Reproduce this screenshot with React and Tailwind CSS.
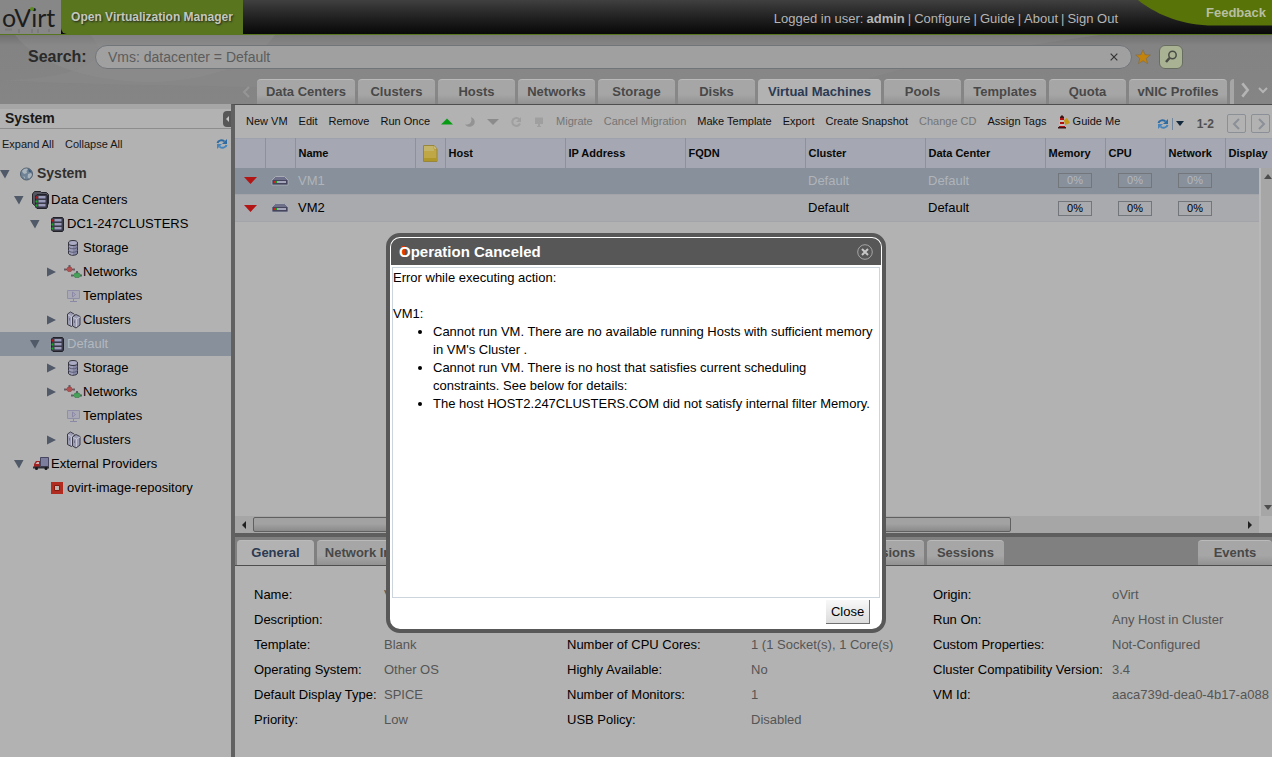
// App.jsx
// -------------------------------------------------------------------
// Virtualization admin console: header, search, system tree, VM grid,
// details panel and the "Operation Canceled" dialog on top of it all.
// -------------------------------------------------------------------

import React from "react";

// ─── Data ─────────────────────────────────────────────────────────────────────
const MAIN_TABS = [
  { label: "Data Centers", width: "w-[98px]" },
  { label: "Clusters", width: "w-[77px]" },
  { label: "Hosts", width: "w-[77px]" },
  { label: "Networks", width: "w-[77px]" },
  { label: "Storage", width: "w-[77px]" },
  { label: "Disks", width: "w-[77px]" },
  { label: "Virtual Machines", width: "w-[123px]", active: true },
  { label: "Pools", width: "w-[77px]" },
  { label: "Templates", width: "w-[82px]" },
  { label: "Quota", width: "w-[77px]" },
  { label: "vNIC Profiles", width: "w-[98px]" },
];

const TREE = [
  { label: "System", level: 0, icon: "globe", arrow: "down" },
  { label: "Data Centers", level: 1, icon: "racks", arrow: "down" },
  { label: "DC1-247CLUSTERS", level: 2, icon: "rack", arrow: "down" },
  { label: "Storage", level: 3, icon: "storage" },
  { label: "Networks", level: 3, icon: "network", arrow: "right" },
  { label: "Templates", level: 3, icon: "template" },
  { label: "Clusters", level: 3, icon: "cluster", arrow: "right" },
  { label: "Default", level: 2, icon: "rack", arrow: "down", selected: true },
  { label: "Storage", level: 3, icon: "storage", arrow: "right" },
  { label: "Networks", level: 3, icon: "network", arrow: "right" },
  { label: "Templates", level: 3, icon: "template" },
  { label: "Clusters", level: 3, icon: "cluster", arrow: "right" },
  { label: "External Providers", level: 1, icon: "truck", arrow: "down" },
  { label: "ovirt-image-repository", level: 2, icon: "repo" },
];

const INDENT = ["pl-0", "pl-[14px]", "pl-[30px]", "pl-[46px]"];

const VMS = [
  { name: "VM1", cluster: "Default", dataCenter: "Default", selected: true },
  { name: "VM2", cluster: "Default", dataCenter: "Default" },
];

const DETAILS_LEFT = [
  ["Name:", "VM1"],
  ["Description:", ""],
  ["Template:", "Blank"],
  ["Operating System:", "Other OS"],
  ["Default Display Type:", "SPICE"],
  ["Priority:", "Low"],
];

const DETAILS_MIDDLE = [
  ["Number of CPU Cores:", "1 (1 Socket(s), 1 Core(s)"],
  ["Highly Available:", "No"],
  ["Number of Monitors:", "1"],
  ["USB Policy:", "Disabled"],
];

const DETAILS_RIGHT = [
  ["Origin:", "oVirt"],
  ["Run On:", "Any Host in Cluster"],
  ["Custom Properties:", "Not-Configured"],
  ["Cluster Compatibility Version:", "3.4"],
  ["VM Id:", "aaca739d-dea0-4b17-a088"],
];

// ─── Icons ────────────────────────────────────────────────────────────────────
const Rack = () => (
  <>
    <path d="M3.500 4 5 2.500h9.500l1 1.500v11l-1 1.500H5L3.500 15z" fill="#3c3c49" stroke="#22222b" />
    <path d="M6.500 5h7M6.500 9h7M6.500 13h7" stroke="#9a9bb8" strokeWidth="2" />
    <path d="M6.500 6.500h7M6.500 10.500h7M6.500 14.500h7" stroke="#626380" />
    <path d="M3.500 4.500h2v2h-2z" fill="#c21212" />
    <path d="M3.500 8.500h2v2h-2zM3.500 12.500h2v2h-2z" fill="#16ad22" />
  </>
);

const TREE_ICONS = {
  globe: (
    <>
      <circle cx="8.500" cy="9" r="6" fill="#6f8296" stroke="#52606f" />
      <path d="M4 6c2-3 5-3 6-2L8.500 6 9 8 6.500 9 5 8zM10 9l3-1 1 2-2.500 3.500-2-1zM5 11l2 1v2z" fill="#a9b4bc" />
      <path d="M10 4c2 .5 3.500 2 3.700 3.500L11 7z" fill="#3f5c7b" />
    </>
  ),
  racks: (
    <>
      <path d="M.5 3 2.500.5h6l1 1h5l2 2v9l-2 3H4l-3.500-3z" fill="#565661" stroke="#26262e" />
      <g transform="translate(0 1)">
        <Rack />
      </g>
    </>
  ),
  rack: <Rack />,
  storage: (
    <>
      <path d="M4.500 4v10c0 3 9 3 9 0V4z" fill="#8687a5" stroke="#34343f" />
      <path d="M6 5v10M8 5v11" stroke="#b1b2c8" />
      <ellipse cx="9" cy="4" rx="4.500" ry="2.500" fill="#a9aac3" stroke="#34343f" />
      <path d="M4.500 7.500c0 3 9 3 9 0M4.500 11c0 3 9 3 9 0" fill="none" stroke="#5a5b74" />
    </>
  ),
  network: (
    <>
      <path d="M0 6.500h11M7 12.500h11" stroke="#50525a" />
      <path d="M0 5.500h2v2H0zM9 5.500h2v2H9zM7 11.500h2v2H7zM16 11.500h2v2h-2zM4.500 2h2v2h-2zM12 8h2v2h-2z" fill="#5e6066" />
      <path d="M2.500 6 4 4h3l1.500 2v1L7 8.500H4L2.500 7z" fill="#b05050" stroke="#803838" strokeWidth=".5" />
      <path d="M9.500 12l1.500-2h4l1.500 2v1L15 14.500h-4L9.500 13z" fill="#46a058" stroke="#2c7040" strokeWidth=".5" />
    </>
  ),
  template: (
    <>
      <path d="M3.500 3.500h12v8h-12z" fill="#a9a9b6" stroke="#908fa8" />
      <path d="M8.500 5v5l3-2.500zM9.500 12v2M6 14.500h7" fill="none" stroke="#8a88a5" />
    </>
  ),
  cluster: (
    <>
      <path d="M3.500 3 6.500 1l3.500 2v10l-2.500 2.500-4-2z" fill="#9c9cb4" stroke="#3a3a49" />
      <path d="M4 4l3.500 1.500L10 3.500M7.500 5.500v9" fill="none" stroke="#c6c6d4" />
      <path d="M8.500 6 12 3.500l4 2v8.500L12 17l-3.500-2z" fill="#9c9cb4" stroke="#3a3a49" />
      <path d="M9 6.500 12.500 8 16 6M12.500 8v8" fill="none" stroke="#c6c6d4" />
      <path d="M10.500 9.500v2.500M5.500 7v2.500" stroke="#74748f" />
    </>
  ),
  truck: (
    <>
      <path d="M8.500 2.500h8v9h-8z" fill="#7d7e9d" stroke="#454560" />
      <path d="M2 12V9l2-3h4v6z" fill="#a32222" />
      <path d="M3.500 9 5 7h2v2z" fill="#d0b0b0" />
      <path d="M1 12.500h16" stroke="#303038" strokeWidth="2" />
      <circle cx="4.500" cy="13.500" r="1.500" fill="#17171b" />
      <circle cx="14" cy="13.500" r="1.500" fill="#17171b" />
    </>
  ),
  repo: (
    <>
      <path d="M3 3h12v12H3z" fill="#b02c20" />
      <path d="M6.500 6.500h5v5h-5z" fill="#c0b3ad" stroke="#85180f" />
    </>
  ),
};

function RefreshIcon() {
  return (
    <svg width="12" height="12" viewBox="0 0 12 12" fill="none" stroke="#2f6ba3" strokeWidth="2">
      <path d="M1.500 5C2 2.500 6.500 1 8.500 3.500" />
      <path d="M10.500 7C10 9.500 5.500 11 3.500 8.500" stroke="#4684bb" />
      <path d="M11 1v5H6z" fill="#2f6ba3" stroke="none" />
      <path d="M1 11V6h5z" fill="#4684bb" stroke="none" />
    </svg>
  );
}

function TreeArrow({ dir }) {
  return (
    <svg className="shrink-0" width="10" height="10" viewBox="0 0 10 10" fill="#505a68">
      {dir === "down" && <path d="M0 1h9.500L5 9.500z" />}
      {dir === "right" && <path d="M1 .5v9L10 5z" />}
    </svg>
  );
}

function ServerIcon() {
  return (
    <svg width="18" height="12" viewBox="0 0 18 12">
      <path d="M4.500 1.500h9L17 5v5H1V5z" fill="#6e6f88" stroke="#a9acb5" />
      <path d="M1.500 5h15v4.500h-15z" fill="#45465e" />
      <path d="M6 6h9v2H6z" fill="#a4a5ba" />
      <path d="M3 6h1.500v2H3z" fill="#d02020" />
      <path d="M4.500 6H6v2H4.500z" fill="#10a020" />
    </svg>
  );
}

function Chevron({ d, size = 12, color = "#c8c8c8", weight = 2 }) {
  return (
    <svg width={size} height={size} viewBox="0 0 12 12" fill="none" stroke={color} strokeWidth={weight}>
      <path d={d} />
    </svg>
  );
}

// ─── Header ───────────────────────────────────────────────────────────────────
function Header() {
  return (
    <header className="flex h-[35px] shrink-0 border-b border-[#57751f] bg-linear-to-b from-[#404040] to-[#080808]">
      <div className="w-[61px] shrink-0 bg-[#878787]">
        <svg width="61" height="34" viewBox="0 0 61 34">
          <text x="2" y="27" fontFamily="Lato, sans-serif" fontSize="25" fill="#1d1d1d">
            oVirt
          </text>
          <circle cx="32" cy="9" r="2" fill="#5b8a1c" />
          <path d="M5 29.500h7M19 29v4M32 29v4M38 29v4M49 29v3" stroke="#7b7b7b" strokeWidth="2" />
        </svg>
      </div>
      <div className="flex w-[182px] shrink-0 items-center justify-center rounded-bl-md bg-[#59761f] text-[12px] font-bold text-[#c4c8bc] [text-shadow:1px_1px_2px_#222]">
        Open Virtualization Manager
      </div>
      <nav className="flex min-w-0 flex-1 items-center justify-end gap-[3px] pt-1 pr-5 text-[13px] whitespace-nowrap text-[#b5b5b5]">
        <span>Logged in user:</span>
        <b>admin</b>
        {["Configure", "Guide", "About", "Sign Out"].map((item) => (
          <React.Fragment key={item}>
            <span>|</span>
            <a href="#">{item}</a>
          </React.Fragment>
        ))}
      </nav>
      <div className="relative h-[26px] w-[134px] shrink-0">
        <svg className="absolute inset-0" width="134" height="26" viewBox="0 0 134 26">
          <path d="M0 0C16 13 40 24 70 25.500h64V0z" fill="#587308" />
        </svg>
        <a href="#" className="relative flex h-full items-center justify-end pr-[6px] text-[13px] font-bold text-[#b8bfa0]">
          Feedback
        </a>
      </div>
    </header>
  );
}

// ─── Search bar ───────────────────────────────────────────────────────────────
function SearchBar() {
  return (
    <form className="relative flex items-center pt-[10px] pr-[89px] pl-7">
      <label htmlFor="search" className="w-[67px] text-[16px] font-bold text-[#2a2a2a]">
        Search:
      </label>
      <div className="flex h-6 min-w-0 flex-1 items-center rounded-full border border-[#71757a] bg-[#a0a0a0] pr-3 pl-3">
        <input
          id="search"
          defaultValue="Vms: datacenter = Default"
          className="min-w-0 flex-1 bg-transparent text-[14px] text-[#5c5c5c] outline-none"
        />
        <button type="button" aria-label="Clear search">
          <Chevron d="M2 2l8 8M10 2l-8 8" size={10} color="#333" weight={1.4} />
        </button>
      </div>
      <button type="button" aria-label="Bookmark" className="ml-[3px]">
        <svg width="16" height="16" viewBox="0 0 16 16">
          <path d="M8 .8l2 4.900 5.300.3-4.100 3.400 1.400 5.300L8 11.800l-4.600 2.900 1.400-5.300L.7 6 6 5.700z" fill="#c4830a" stroke="#7c6c4c" strokeWidth=".6" />
        </svg>
      </button>
      <button
        type="submit"
        aria-label="Search"
        className="ml-2 flex h-6 w-6 items-center justify-center rounded-md border border-[#686d62] bg-[#a9b394]"
      >
        <svg width="14" height="14" viewBox="0 0 14 14" fill="none" stroke="#4a4c46">
          <circle cx="8.500" cy="5" r="3.700" strokeWidth="1.500" />
          <path d="M5.500 8 2 12" strokeWidth="2.500" />
        </svg>
      </button>
    </form>
  );
}

// ─── Tabs ─────────────────────────────────────────────────────────────────────
function Tab({ label, width, active }) {
  return (
    <button
      className={`h-[25px] shrink-0 overflow-hidden rounded-t-sm border-t border-[#bababa] text-[13px] font-bold whitespace-nowrap ${width} ${
        active
          ? "bg-[#b2b2b2] text-[#2b3a52]"
          : "bg-linear-to-b from-[#a6a6a6] from-60% to-[#929292] text-[#484848]"
      }`}
    >
      {label}
    </button>
  );
}

function MainTabs() {
  return (
    <div className="relative flex items-end gap-[3px] pt-[10px] pl-[241px]">
      <span className="flex h-[25px] w-[13px] shrink-0 items-center">
        <Chevron d="M8 1 3 6l5 5" color="#969696" />
      </span>
      {MAIN_TABS.map((tab) => (
        <Tab key={tab.label} {...tab} />
      ))}
      <span className="h-[25px] w-1 shrink-0 rounded-tl-sm bg-[#a6a6a6]" />
      <div className="flex h-[25px] items-center gap-1 pb-1">
        <button aria-label="Scroll tabs right">
          <Chevron d="M4 1l4 5-4 5" size={16} color="#b4b4b4" />
        </button>
        <button aria-label="All tabs">
          <Chevron d="M2 4l4 4 4-4" color="#b4b4b4" />
        </button>
      </div>
    </div>
  );
}

// ─── System tree ──────────────────────────────────────────────────────────────
function Sidebar() {
  return (
    <aside className="flex w-[231px] shrink-0 flex-col bg-[#b2b2b2]">
      <div className="h-[5px] bg-[#a6a6a6]" />
      <div className="flex h-5 items-center justify-between border-b border-[#8d8d8d] pl-[5px]">
        <h2 className="text-[14px] font-bold text-[#181818]">System</h2>
        <button aria-label="Collapse tree" className="flex h-4 w-2 items-center rounded-l bg-[#575757]">
          <svg width="8" height="8" viewBox="0 0 8 8" fill="#c5c5c5">
            <path d="M6 1v6L3 4z" />
          </svg>
        </button>
      </div>
      <div className="flex h-[30px] items-center gap-[11px] pr-[3px] pl-[2px] text-[11px] text-[#181818]">
        <button>Expand All</button>
        <button className="mr-auto">Collapse All</button>
        <button aria-label="Refresh tree">
          <RefreshIcon />
        </button>
      </div>
      <ul className="text-[13px] whitespace-nowrap">
        {TREE.map((node, i) => (
          <li
            key={i}
            className={`flex items-center ${INDENT[node.level]} ${
              node.level === 0 ? "h-[29px] text-[14px] font-bold text-[#303030]" : "h-6"
            } ${node.selected ? "bg-[#87909b] text-[#b4b8bf]" : node.level === 0 ? "" : "text-black"}`}
          >
            <TreeArrow dir={node.arrow} />
            <svg className="mr-px ml-2 shrink-0" width="18" height="18" viewBox="0 0 18 18">
              {TREE_ICONS[node.icon]}
            </svg>
            {node.label}
          </li>
        ))}
      </ul>
    </aside>
  );
}

// ─── Toolbar ──────────────────────────────────────────────────────────────────
function Action({ label, disabled }) {
  return (
    <button disabled={disabled} className={disabled ? "text-[#757575]" : "text-[#101010]"}>
      {label}
    </button>
  );
}

function IconAction({ label, children }) {
  return (
    <button aria-label={label}>
      <svg width="12" height="12" viewBox="0 0 12 12">
        {children}
      </svg>
    </button>
  );
}

function Toolbar() {
  return (
    <div className="flex h-[33px] shrink-0 items-center justify-between pr-[2px] pl-[11px] text-[11px] whitespace-nowrap">
      <div className="flex items-center gap-[11px]">
        <Action label="New VM" />
        <Action label="Edit" />
        <Action label="Remove" />
        <Action label="Run Once" />
        <IconAction label="Run">
          <path d="M0 8.500 6 2.500l6 6z" fill="#079b14" />
        </IconAction>
        <IconAction label="Suspend">
          <path d="M7 1c5 2 5 8 0 9.500-3 .7-5-.5-6-2C6 9 8.500 6 7 1z" fill="#939393" />
        </IconAction>
        <IconAction label="Shut down">
          <path d="M0 3h12L6 9z" fill="#8b8b8b" />
        </IconAction>
        <IconAction label="Reboot">
          <path d="M9.500 3.500A4 4 0 1 0 10 7.500" fill="none" stroke="#9f9f9f" strokeWidth="2" />
          <path d="M11 1v5H6z" fill="#9f9f9f" />
        </IconAction>
        <IconAction label="Console">
          <path d="M2 1.500h8V8H2zM5 8h2v2H5zM4 10h4v1H4z" fill="#9f9f9f" />
        </IconAction>
        <Action label="Migrate" disabled />
        <Action label="Cancel Migration" disabled />
        <Action label="Make Template" />
        <Action label="Export" />
        <Action label="Create Snapshot" />
        <Action label="Change CD" disabled />
        <Action label="Assign Tags" />
        <button className="flex items-center gap-[3px] text-[#101010]">
          <svg width="12" height="14" viewBox="0 0 12 14">
            <path d="M2 3h4l1 9H1z" fill="#c9c0c0" />
            <path d="M2 3h4v2H2zM2 7h4v2H2zM1 11h6v1H1z" fill="#b01010" />
            <path d="M2 2 4 0l2 2v1H2zM0 12h8v1.500H0z" fill="#3c1515" />
            <path d="M6 5l3-2 3 5-5 2z" fill="#c59712" />
          </svg>
          Guide Me
        </button>
      </div>
      <div className="flex items-center gap-[5px] pt-1">
        <button aria-label="Refresh" className="flex items-center gap-[3px]">
          <RefreshIcon />
          <span className="h-3 w-px bg-[#6f88a0]" />
          <svg width="8" height="5" viewBox="0 0 8 5">
            <path d="M0 0h8L4 5z" fill="#14283c" />
          </svg>
        </button>
        <span className="px-2 text-[12px] font-bold text-[#505050]">1-2</span>
        <button aria-label="Previous page" className="flex h-[19px] w-[19px] items-center justify-center rounded-xs border border-[#8b8f98]">
          <Chevron d="M8 1 3 6l5 5" color="#8b8f98" />
        </button>
        <button aria-label="Next page" className="flex h-[19px] w-[19px] items-center justify-center rounded-xs border border-[#8b8f98]">
          <Chevron d="M4 1l5 5-5 5" color="#8b8f98" />
        </button>
      </div>
    </div>
  );
}

// ─── VM grid ──────────────────────────────────────────────────────────────────
function Head({ children }) {
  return (
    <th className="border-r border-[#8d919c] pl-[3px] text-left font-bold whitespace-nowrap last:border-r-0">
      {children}
    </th>
  );
}

function Usage({ selected }) {
  return (
    <td>
      <div
        className={`mx-auto h-[15px] w-[34px] border border-[#73767b] text-center text-[11px] leading-[13px] ${
          selected ? "text-[#b4b8bf]" : "text-black"
        }`}
      >
        0%
      </div>
    </td>
  );
}

function VmGrid() {
  return (
    <div className="relative min-h-[160px] flex-1 overflow-hidden">
      <table className="w-full table-fixed border-collapse text-[13px]">
        <colgroup>
          <col className="w-[30px]" />
          <col className="w-[30px]" />
          <col className="w-[120px]" />
          <col className="w-[30px]" />
          <col className="w-[120px]" />
          <col className="w-[120px]" />
          <col className="w-[120px]" />
          <col className="w-[120px]" />
          <col className="w-[120px]" />
          <col className="w-[60px]" />
          <col className="w-[60px]" />
          <col className="w-[60px]" />
          <col />
        </colgroup>
        <thead>
          <tr className="h-[29px] border-t border-[#9da2ac] bg-[#a5a8b2] text-[11px] text-[#080808]">
            <Head />
            <Head />
            <Head>Name</Head>
            <Head>
              <svg className="ml-1" width="15" height="17" viewBox="0 0 15 17">
                <path d="M.5.5H11l3 3.500v12.500H.5z" fill="#bfa745" stroke="#98863c" />
                <path d="M1 1h10v5H1z" fill="#c4b468" />
                <path d="M11 .5V4h3z" fill="#ddd090" stroke="#98863c" strokeWidth=".5" />
                <path d="M1 13h13v3H1z" fill="#b0972a" />
              </svg>
            </Head>
            <Head>Host</Head>
            <Head>IP Address</Head>
            <Head>FQDN</Head>
            <Head>Cluster</Head>
            <Head>Data Center</Head>
            <Head>Memory</Head>
            <Head>CPU</Head>
            <Head>Network</Head>
            <Head>Display</Head>
          </tr>
        </thead>
        <tbody>
          {VMS.map((vm) => (
            <tr
              key={vm.name}
              className={`h-[27px] border-b border-[#a2a4a9] ${
                vm.selected ? "bg-[#87909b] text-[#b0b4ba]" : "bg-[#a9aaae] text-black"
              }`}
            >
              <td>
                <svg className="mx-auto" width="13" height="7" viewBox="0 0 13 7">
                  <path d="M0 0h13L6.500 7z" fill="#b31414" />
                </svg>
              </td>
              <td>
                <span className="flex justify-center">
                  <ServerIcon />
                </span>
              </td>
              <td className="pl-[3px]">{vm.name}</td>
              <td />
              <td />
              <td />
              <td />
              <td className="pl-[3px]">{vm.cluster}</td>
              <td className="pl-[3px]">{vm.dataCenter}</td>
              <Usage selected={vm.selected} />
              <Usage selected={vm.selected} />
              <Usage selected={vm.selected} />
              <td />
            </tr>
          ))}
        </tbody>
      </table>
      {/* vertical scrollbar lies over the right edge of the rows */}
      <div className="absolute top-[30px] right-0 bottom-0 flex w-[13px] flex-col items-end justify-between border-l-2 border-[#b8b8b8] bg-[#a6a6a6] py-[6px]">
        <svg width="8" height="5" viewBox="0 0 8 5">
          <path d="M0 5h8L4 0z" fill="#4d4d4d" />
        </svg>
        <svg width="8" height="5" viewBox="0 0 8 5">
          <path d="M0 0h8L4 5z" fill="#4d4d4d" />
        </svg>
      </div>
    </div>
  );
}

function HorizontalScrollbar() {
  return (
    <div className="mr-[13px] flex h-[17px] shrink-0 items-center bg-[#a6a6a6]">
      <svg className="mx-[5px] shrink-0" width="8" height="8" viewBox="0 0 8 8">
        <path d="M6 0v8L2 4z" fill="#202020" />
      </svg>
      <div className="h-[15px] w-[74%] rounded-xs border border-[#606060] bg-linear-to-b from-[#a2a2a2] from-45% to-[#8a8a8a]" />
      <svg className="mr-[5px] ml-auto shrink-0" width="8" height="8" viewBox="0 0 8 8">
        <path d="M2 0v8l4-4z" fill="#202020" />
      </svg>
    </div>
  );
}

// ─── Details panel ────────────────────────────────────────────────────────────
function DetailList({ rows, columns, className = "" }) {
  return (
    <dl className={`grid min-w-0 auto-rows-[25px] items-center whitespace-nowrap ${columns} ${className}`}>
      {rows.map(([label, value]) => (
        <React.Fragment key={label}>
          <dt className="text-black">{label}</dt>
          <dd className="h-[25px] leading-[25px] text-[#555]">{value}</dd>
        </React.Fragment>
      ))}
    </dl>
  );
}

function DetailsPanel() {
  return (
    <section className="shrink-0 border-t-4 border-[#5e5e5e]">
      <div className="flex gap-[3px] border-b border-[#4e4e4e] bg-[#808080] pt-[3px] pl-[2px]">
        <Tab label="General" width="w-[77px]" active />
        <Tab label="Network Interfaces" width="w-[132px]" />
        <span className="w-[374px] shrink-0" />
        <Tab label="Permissions" width="w-[95px]" />
        <Tab label="Sessions" width="w-[77px]" />
        <span className="flex-1" />
        <Tab label="Events" width="w-[74px]" />
      </div>
      <div className="flex bg-[#b2b2b2] pt-4 pr-[3px] pb-[25px] pl-[19px] text-[13px]">
        <DetailList rows={DETAILS_LEFT} columns="grid-cols-[130px_1fr]" className="w-[313px] shrink-0" />
        <DetailList rows={DETAILS_MIDDLE} columns="grid-cols-[184px_1fr]" className="w-[366px] shrink-0 pt-[50px]" />
        <DetailList rows={DETAILS_RIGHT} columns="grid-cols-[179px_1fr]" className="flex-1 content-start" />
      </div>
    </section>
  );
}

// ─── Dialog ───────────────────────────────────────────────────────────────────
function ErrorDialog() {
  return (
    <div className="absolute inset-0 flex items-start justify-center pt-[233px]">
      <div
        role="dialog"
        aria-labelledby="dialog-title"
        className="w-[500px] rounded-[14px] border-4 border-[#585858] bg-white text-[13px] text-black"
      >
        <div className="mx-px mt-px flex h-[27px] items-center justify-between rounded-t-[9px] bg-[#575757] px-2">
          <h1
            id="dialog-title"
            className="bg-[linear-gradient(#e03a00,#e03a00)] bg-[length:4px_11px] bg-[position:2px_6px] bg-no-repeat text-[15px] leading-6 font-bold text-white"
          >
            Operation Canceled
          </h1>
          <button aria-label="Close dialog">
            <svg width="16" height="16" viewBox="0 0 16 16" fill="none">
              <circle cx="8" cy="8" r="7.300" stroke="#a5a5a5" />
              <path d="M5 5l6 6M11 5l-6 6" stroke="#c8c8c8" strokeWidth="2" />
            </svg>
          </button>
        </div>
        <div className="mx-[2px] mt-[2px] min-h-[331px] border border-[#ccd5dc] leading-[18px]">
          <p className="pt-px">Error while executing action:</p>
          <p className="pt-[18px]">VM1:</p>
          <ul className="list-disc pr-1 pl-10">
            <li>
              Cannot run VM. There are no available running Hosts with sufficient memory in VM's Cluster .
            </li>
            <li>
              Cannot run VM. There is no host that satisfies current scheduling constraints. See below for
              details:
            </li>
            <li>The host HOST2.247CLUSTERS.COM did not satisfy internal filter Memory.</li>
          </ul>
        </div>
        <div className="flex justify-end pt-[2px] pr-3 pb-[5px]">
          <button className="h-6 w-[44px] border-r border-b border-[#6f6f6f] bg-linear-to-b from-[#f8f8f8] to-[#dcdcdc]">
            Close
          </button>
        </div>
      </div>
    </div>
  );
}

// ─── App ──────────────────────────────────────────────────────────────────────
export default function App() {
  return (
    <div className="relative flex min-h-screen flex-col overflow-hidden bg-[#848484] font-['Liberation_Sans',Arial,sans-serif]">
      <Header />
      <div className="relative shrink-0 bg-linear-to-b from-[#707070] via-[#838383] via-15% to-[#858585]">
        <svg className="absolute inset-0 h-full w-full" viewBox="0 0 1272 69" preserveAspectRatio="none">
          <path d="M15 0C60 60 230 65 275 0z" fill="#929292" opacity=".35" />
          <path d="M0 45C180 55 300 45 500 69L800 69C900 25 1000 15 1100 0H90C120 30 60 45 0 45z" fill="#8e8e8e" opacity=".3" />
        </svg>
        <SearchBar />
        <MainTabs />
      </div>
      <div className="flex flex-1">
        <Sidebar />
        <main className="flex min-w-0 flex-1 flex-col border-t border-l-4 border-t-[#4e4e4e] border-l-[#616161] bg-[#b2b2b2]">
          <Toolbar />
          <VmGrid />
          <HorizontalScrollbar />
          <DetailsPanel />
        </main>
      </div>
      <ErrorDialog />
    </div>
  );
}
